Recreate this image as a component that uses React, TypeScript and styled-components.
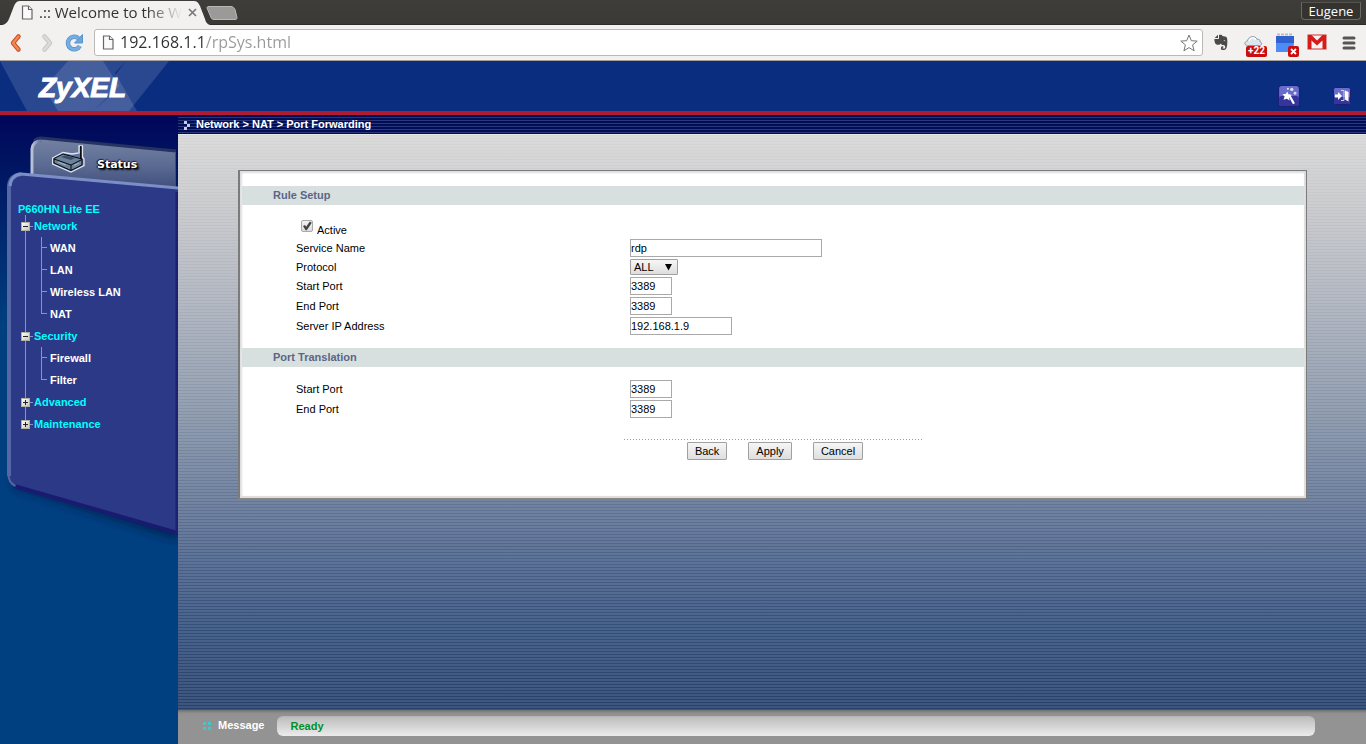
import React from "react";
import styled, { createGlobalStyle } from "styled-components";

const GlobalStyle = createGlobalStyle`
  * { box-sizing: border-box; }
  body { margin: 0; font: 11px/14px "Liberation Sans", Arial, sans-serif; color: #000; background: #003f80; }
  button, input, select { font: inherit; color: inherit; margin: 0; }
  ul { list-style: none; margin: 0; padding: 0; }
  h2 { margin: 0; font: inherit; font-weight: bold; }
  svg { display: block; flex: none; }
`;

const Page = styled.div`
  min-height: 100vh;
  display: flex;
  flex-direction: column;
`;

/* Browser window */
const TabStrip = styled.div`
  height: 25px;
  display: flex;
  align-items: flex-start;
  background: linear-gradient(#3f3d39, #3a3935);
  border-bottom: 1px solid #2c2b28;
`;
const Tab = styled.div`
  position: relative;
  width: 210px;
  height: 25px;
  padding: 0 15px 0 21px;
  display: flex;
  align-items: center;
  gap: 6px;
  flex: none;
`;
const TabShape = styled.svg`
  position: absolute;
  left: 0;
  top: 0;
`;
const TabTitle = styled.span`
  position: relative;
  flex: 1;
  white-space: nowrap;
  font: 15px/22px "Open Sans", "Noto Sans", sans-serif;
  color: #333;
  padding-bottom: 2px;
  mask-image: linear-gradient(90deg, #000 108px, transparent);
`;
const PlainButton = styled.button`
  position: relative;
  padding: 0;
  border: 0;
  background: none;
  display: flex;
  align-items: center;
  justify-content: center;
`;
const NewTab = styled(PlainButton)`
  padding-top: 6px;
  margin-left: -4px;
`;
const UserButton = styled.button`
  margin: 2px 5px 0 auto;
  height: 18px;
  width: 60px;
  padding: 0;
  border: 1px solid #6a6964;
  border-top-color: #55544f;
  border-radius: 0 0 4px 4px;
  background: #34332f;
  color: #fff;
  font: 13px/16px "Open Sans", "Noto Sans", sans-serif;
`;
const Toolbar = styled.div`
  height: 36px;
  padding: 0 6px 0 9px;
  display: flex;
  align-items: center;
  background: #f2f1f0;
  border-bottom: 1px solid #a5a29e;
`;
const NavButtons = styled.div`
  display: flex;
  gap: 12px;
  margin-right: 10px;
`;
const Omnibox = styled.label`
  flex: 1;
  height: 27px;
  padding: 0 4px 0 7px;
  display: flex;
  align-items: center;
  gap: 6px;
  background: #fff;
  border: 1px solid #bcbab7;
  border-radius: 3px;
`;
const UrlInput = styled.input`
  flex: 1;
  min-width: 0;
  height: 24px;
  padding: 0 0 2px;
  border: 0;
  outline: 0;
  font: 16px/22px "Open Sans", "Noto Sans", sans-serif;
  background: linear-gradient(90deg, #303030 84px, #999 84px);
  background-clip: text;
  -webkit-text-fill-color: transparent;
`;
const Extensions = styled.div`
  display: flex;
  align-items: center;
  gap: 10px;
  margin-left: 7px;
`;
const Extension = styled(PlainButton)`
  width: 22px;
  height: 26px;
`;
const Badge = styled.span`
  position: absolute;
  right: -3px;
  bottom: -1px;
  height: 11px;
  padding: 0 2px;
  border-radius: 2px;
  background: #cc0d0d;
  color: #fff;
  font: bold 10px/10px "Roboto", sans-serif;
`;

/* Router page */
const Header = styled.header`
  height: 54px;
  display: flex;
  justify-content: space-between;
  background: #0b2d80;
  border-bottom: 4px solid #b01a32;
`;
const Brand = styled.div`
  position: relative;
  width: 178px;
  padding: 11px 0 0 39px;
  color: #fff;
`;
const BrandArt = styled.svg`
  position: absolute;
  left: 0;
  top: 0;
`;
const BrandName = styled.span`
  position: relative;
  font: italic bold 28px/32px "Liberation Sans", Arial, sans-serif;
  -webkit-text-stroke: 1px #fff;
`;
const HeaderActions = styled.div`
  display: flex;
  align-items: center;
  gap: 33px;
  padding: 19px 15px 0 0;
`;
const Body = styled.div`
  flex: 1;
  display: flex;
`;
const Sidebar = styled.aside`
  position: relative;
  width: 178px;
  flex: none;
  background: linear-gradient(#00055a 0, #00105e 30px, #00256d 110px, #003f80 210px);
`;
const SideArt = styled.svg`
  position: absolute;
  left: 0;
  top: 0;
`;
const StatusLink = styled.a`
  position: relative;
  margin: 28px 0 0 52px;
  display: flex;
  align-items: center;
  gap: 11px;
  height: 32px;
  color: #fff;
  text-decoration: none;
  font: bold 11px/14px "DejaVu Sans", Verdana, sans-serif;
  text-shadow: 1px 1px 1px #000, 2px 2px 2px #000, -1px 0 1px #000, 0 -1px 1px #223;
  & > span { padding-top: 12px; }
`;
const Tree = styled.nav`
  position: relative;
  margin: 27px 0 0 18px;
  font-weight: bold;
`;
const Model = styled.div`
  color: #0ff;
  line-height: 14px;
  margin-bottom: -1px;
`;
const Groups = styled.ul`
  background: linear-gradient(#8b93c4, #8b93c4) 7px 0 / 1px calc(100% - 11px) no-repeat;
`;
const GroupRow = styled.div`
  height: 22px;
  padding-left: 3px;
  display: flex;
  align-items: center;
  gap: 4px;
  background: linear-gradient(#8b93c4, #8b93c4) 12px 11px / 3px 1px no-repeat;
`;
const Toggle = styled.button`
  width: 9px;
  height: 9px;
  padding: 0;
  border: 1px solid #b4b09c;
  background: linear-gradient(135deg, #fff, #c9c5bb);
`;
const TreeLink = styled.a<{ $top?: boolean }>`
  color: ${(p) => (p.$top ? "#0ff" : "#fff")};
  text-decoration: none;
  line-height: 22px;
`;
const SubList = styled.ul`
  background: linear-gradient(#8b93c4, #8b93c4) 23px 0 / 1px calc(100% - 11px) no-repeat;
`;
const SubItem = styled.li`
  height: 22px;
  padding-left: 32px;
  background: linear-gradient(#8b93c4, #8b93c4) 23px 10px / 6px 1px no-repeat;
`;
const Main = styled.main`
  flex: 1;
  min-width: 0;
  display: flex;
  flex-direction: column;
`;
const Breadcrumb = styled.div`
  height: 19px;
  padding-left: 5px;
  display: flex;
  align-items: center;
  gap: 5px;
  color: #fff;
  font-weight: bold;
  background: repeating-linear-gradient(#000c55 0 2px, #28387a 2px 3px);
  & > span { padding-bottom: 2px; }
`;
const Stage = styled.div`
  flex: 1;
  padding: 35px 59px 36px 60px;
  border-top: 1px solid #e8e8e8;
  background:
    repeating-linear-gradient(transparent 0 1px, rgba(255, 255, 255, 0.11) 1px 3px),
    linear-gradient(#d6d6d6 0%, #c6c7ca 12%, #abb0bb 29%, #8896a9 47%, #6c7d9a 60%, #4f658c 72%, #34507c 85%, #26406c 100%);
`;
const Panel = styled.form`
  padding: 15px 2px 0;
  min-height: 329px;
  background: #fff;
  border: 1px solid #7b7b7b;
  border-left-width: 2px;
  border-bottom-color: #8c8880;
  box-shadow: inset -2px -2px 1px #dcdcdc, inset 2px 2px 2px #dedede;
`;
const SectionTitle = styled.h2`
  height: 19px;
  padding-left: 31px;
  line-height: 19px;
  color: #5b6687;
  background: #d7e0de;
`;
const Fields = styled.div`
  padding: 13px 0 13px 54px;
  display: flex;
  flex-direction: column;
  gap: 2px;
`;
const Field = styled.div`
  display: grid;
  grid-template-columns: 334px 1fr;
  align-items: center;
  justify-items: start;
`;
const CheckRow = styled.label`
  padding: 2px 0 0 5px;
  display: flex;
  align-items: flex-start;
  gap: 4px;
  & > span { padding-top: 3px; }
`;
const CheckBox = styled.input`
  appearance: none;
  width: 12px;
  height: 12px;
  border: 1px solid #a9a9a9;
  border-radius: 2px;
  background: linear-gradient(#f2f2f2, #dcdcdc);
  &:checked::after {
    content: "";
    display: block;
    width: 10px;
    height: 10px;
    background: #444;
    clip-path: polygon(10% 50%, 30% 40%, 42% 58%, 78% 6%, 98% 18%, 48% 92%, 36% 92%);
  }
`;
const TextInput = styled.input<{ $w: number }>`
  width: ${(p) => p.$w}px;
  height: 18px;
  padding: 0;
  border: 1px solid #a9a9a9;
  border-radius: 0;
  background: #fff;
`;
const SelectWrap = styled.div`
  position: relative;
  display: flex;
  height: 16px;
`;
const Select = styled.select`
  appearance: none;
  width: 48px;
  height: 16px;
  padding: 0 3px;
  border: 1px solid #a0a0a0;
  border-radius: 1px;
  background: linear-gradient(#f6f6f6, #dedede);
  line-height: 14px;
`;
const Caret = styled.svg`
  position: absolute;
  right: 6px;
  top: 5px;
  pointer-events: none;
`;
const Actions = styled.div`
  width: 299px;
  margin: 8px auto 0;
  padding: 3px 0 0 4px;
  display: flex;
  justify-content: center;
  gap: 21px;
  background: repeating-linear-gradient(90deg, #999 0 1px, transparent 1px 3px) 0 0 / 100% 1px no-repeat;
`;
const FormButton = styled.button`
  height: 18px;
  padding: 0 7px;
  border: 1px solid #a0a0a0;
  border-radius: 1px;
  background: linear-gradient(#f6f6f6, #dedede);
  line-height: 16px;
`;
const MessageBar = styled.footer`
  height: 34px;
  padding: 3px 51px 5px 25px;
  display: flex;
  align-items: center;
  gap: 6px;
  color: #fff;
  font-weight: bold;
  background: linear-gradient(#6f7073 0, #8e8e8e 3px, #939393 6px);
  & > span { padding-bottom: 2px; }
`;
const MessageText = styled.output`
  flex: 1;
  height: 20px;
  margin-left: 7px;
  padding-left: 13px;
  line-height: 18px;
  color: #009029;
  border-radius: 6px;
  border-top: 1px solid #b5b5b5;
  background: linear-gradient(#bdbdbd, #ececec);
`;

const PageIconSvg = styled.svg`
  position: relative;
`;
const PageIcon = () => (
  <PageIconSvg width="12" height="15" viewBox="0 0 12 15" fill="#fafafa" stroke="#666" strokeWidth="1.200">
    <path d="M1.500 1h6l3.500 3.500v9.500h-9.500z" />
    <path d="M7.500 1v3.500h3.500" />
  </PageIconSvg>
);

const RouterIcon = () => (
  <svg width="34" height="28" viewBox="0 0 34 28">
    <path d="M0.500 13 11 7.500l9 1.500 7-1V1h3.500v11l1.500 2v6.500l-13 6.500L0.500 19z" fill="none" stroke="#dfe4ee" strokeWidth="1.300" />
    <path d="M2 13.500 11 9l19 5v6l-11 5.500L2 18z" fill="#6c8299" stroke="#05070f" />
    <path d="M2 14l17 6 11-5.500M19 20v5" fill="none" stroke="#05070f" />
    <path d="M9 12l10 3 4-2-10-2.500z" fill="#3b4a66" />
    <path d="M28.800 1v13" stroke="#05070f" strokeWidth="1.500" />
    <path d="M22 20.500l5-2.500M6 17l8 3" stroke="#a9bacd" />
  </svg>
);

const groups = [
  { name: "Network", open: true, items: ["WAN", "LAN", "Wireless LAN", "NAT"] },
  { name: "Security", open: true, items: ["Firewall", "Filter"] },
  { name: "Advanced", open: false, items: [] },
  { name: "Maintenance", open: false, items: [] },
];

function TextField({ id, label, value, w = 42 }: { id: string; label: string; value: string; w?: number }) {
  return (
    <Field>
      <label htmlFor={id}>{label}</label>
      <TextInput id={id} $w={w} defaultValue={value} />
    </Field>
  );
}

function BrowserChrome() {
  return (
    <>
      <TabStrip>
        <Tab>
          <TabShape width="212" height="25">
            <path d="M0 25c5 0 7-2 9-6l5-13c2-4 3-5 7-5h172c4 0 5 1 7 5l5 13c1 4 3 6 7 6z" fill="#f2f1f0" />
          </TabShape>
          <PageIcon />
          <TabTitle>.:: Welcome to the W</TabTitle>
          <PlainButton aria-label="Close tab">
            <svg width="9" height="9" stroke="#777" strokeWidth="1.600"><path d="M1 1l7 7M8 1l-7 7" /></svg>
          </PlainButton>
        </Tab>
        <NewTab aria-label="New tab">
          <svg width="32" height="14"><path d="M3 0.500h22c2 0 3 1 4 3l2 8c0 1.500-.5 2-2 2H8c-2 0-2.500-1-3-2L1 2C1 1 1.500.5 3 .5z" fill="#9b9a98" stroke="#b9b8b5" /></svg>
        </NewTab>
        <UserButton>Eugene</UserButton>
      </TabStrip>
      <Toolbar>
        <NavButtons>
          <PlainButton aria-label="Back">
            <svg width="14" height="20"><path d="M9.500 3.500 4 10l5.500 6.500" fill="none" stroke="#cf5322" strokeWidth="4.500" strokeLinecap="round" strokeLinejoin="round" /><path d="M9.500 3.500 4 10l5.500 6.500" fill="none" stroke="#f28a5a" strokeWidth="2.200" strokeLinecap="round" /></svg>
          </PlainButton>
          <PlainButton aria-label="Forward">
            <svg width="18" height="20"><path d="M9.500 3.500 15 10l-5.500 6.500" fill="none" stroke="#c9c7c4" strokeWidth="4.500" strokeLinecap="round" strokeLinejoin="round" /><path d="M9.500 3.500 15 10l-5.500 6.500" fill="none" stroke="#dddbd9" strokeWidth="2.500" strokeLinecap="round" /></svg>
          </PlainButton>
          <PlainButton aria-label="Reload">
            <svg width="19" height="20"><path d="M14.800 13a6.300 6.300 0 1 1-1.200-7.500" fill="none" stroke="#5a94cc" strokeWidth="4.500" /><path d="M14.800 13a6.300 6.300 0 1 1-1.200-7.500" fill="none" stroke="#77aee0" strokeWidth="2.800" /><path d="M17.500 1.500v8.500H9.500z" fill="#6ba5da" stroke="#5a94cc" /></svg>
          </PlainButton>
        </NavButtons>
        <Omnibox>
          <PageIcon />
          <UrlInput aria-label="Address" defaultValue="192.168.1.1/rpSys.html" />
          <PlainButton aria-label="Bookmark this page">
            <svg width="18" height="18" viewBox="0 0 18 18"><path d="M9 1l2.300 5.700 5.900.4-4.600 3.800 1.500 5.900L9 13.600l-5.100 3.200 1.500-5.900L.8 7.100l5.900-.4z" fill="#fff" stroke="#777" strokeLinejoin="round" /></svg>
          </PlainButton>
        </Omnibox>
        <Extensions>
          <Extension aria-label="Evernote">
            <svg width="14" height="17" viewBox="0 0 14 17"><path d="M5 1c2-.6 3 0 3.500 1l3.500.7c1.200.4 1.500 3 1.300 6.300-.2 4-.8 7-3.300 7H8.500C7 16 6.600 14.800 7 13.600c.3-1 1.200-1.400 2.300-1.200v1.400H8.600v.8h1.600c.9 0 1-.8 1-1.700 0-1.300-.9-1.900-2.400-1.900-1 0-1.600-.7-1.800-1.500-.8 1.300-3 1.400-4.500 1C1 10 .3 7.500.4 5H4c.8 0 1-.3 1-1z" fill="#4a4a4a" /><path d="M.7 4 4 .8V4z" fill="#4a4a4a" /><path d="M9.500 7c.2-1 1.700-1 2 .3-.7-.3-1.300-.3-2-.3z" fill="#eee" /></svg>
          </Extension>
          <Extension aria-label="Weather, 22 degrees">
            <svg width="19" height="20" viewBox="0 0 19 20"><path d="M3.500 12.500C0 12.500 0 8.500 3.500 8c.5-4.500 8-6.500 9.500-1.500 2-1 3.500.5 3 2.500 2.500.5 2 3.500-.5 3.500z" fill="#dbe6ee" stroke="#8b9ba8" /><path d="M5 8c1-3.500 5-4.500 7-1" fill="none" stroke="#fff" strokeWidth="1.500" /></svg>
            <Badge>+22</Badge>
          </Extension>
          <Extension aria-label="Calendar">
            <svg width="20" height="20"><rect x="1" y="3" width="18" height="7" fill="#2f62cf" /><path d="M1 10h18l-1 9H1z" fill="#4d8bf5" /><path d="M2 1.500h16" stroke="#bdbdbd" strokeWidth="2" strokeDasharray="3 1" /></svg>
            <Badge aria-label="Error">
              <svg width="7" height="11" stroke="#fff" strokeWidth="1.800"><path d="M1 3l5 5M6 3l-5 5" /></svg>
            </Badge>
          </Extension>
          <Extension aria-label="Mail">
            <svg width="20" height="18"><rect x="1" y="1" width="18" height="14" fill="#f3f3f3" stroke="#d03030" /><path d="M1 1h3.500L10 6.500 15.500 1H19v14h-3.500V6.500L10 11.500 4.500 6.500V15H1z" fill="#d61b1b" /></svg>
          </Extension>
          <Extension aria-label="Menu">
            <svg width="14" height="14" stroke="#555" strokeWidth="3" strokeLinecap="round"><path d="M2 2h10M2 7h10M2 12h10" /></svg>
          </Extension>
        </Extensions>
      </Toolbar>
    </>
  );
}

function SideNav() {
  return (
    <Sidebar>
      <SideArt width="178" height="430" viewBox="0 0 178 430">
        <defs>
          <linearGradient id="statusFill" x1="0" y1="0" x2="0" y2="1">
            <stop offset="0" stopColor="#7482a2" />
            <stop offset="0.500" stopColor="#5a6a92" />
            <stop offset="1" stopColor="#3a4678" />
          </linearGradient>
          <linearGradient id="edge" x1="0" y1="0" x2="1" y2="0">
            <stop offset="0" stopColor="#b9c3d8" />
            <stop offset="1" stopColor="#5d6c98" />
          </linearGradient>
          <filter id="soft" x="-20%" y="-20%" width="140%" height="140%"><feGaussianBlur stdDeviation="4" /></filter>
        </defs>
        <path d="M32 74V32q1-9 9-9l135 14v42z" fill="url(#statusFill)" />
        <path d="M34 26q3-3 7-3l135 13" fill="none" stroke="#26325f" strokeWidth="3" />
        <path d="M32 66V34q1-8 9-8" fill="none" stroke="url(#edge)" strokeWidth="3" />
        <path d="M175.500 38v37" stroke="#3f4c79" strokeWidth="1" />
        <path d="M14 373l164 52V200H14z" fill="#001a45" opacity="0.700" filter="url(#soft)" />
        <path d="M7 70q1-12 13-12l158 16v345L18 372q-10-2-11-11z" fill="#2b3986" />
        <path d="M14 371l164 47" stroke="#191b70" strokeWidth="4" />
        <path d="M177 77v341" stroke="#1c2173" strokeWidth="3" />
        <path d="M9 361V72q1-11 12-13" fill="none" stroke="#5368a5" strokeWidth="4" />
        <path d="M10 71q1-11 11-12l157 14" fill="none" stroke="#7b8fc6" strokeWidth="3" />
        <path d="M8.500 359q0 9 7 12" fill="none" stroke="#5368a5" strokeWidth="2" />
      </SideArt>
      <StatusLink href="#status">
        <RouterIcon />
        <span>Status</span>
      </StatusLink>
      <Tree aria-label="Settings">
        <Model>P660HN Lite EE</Model>
        <Groups>
          {groups.map((g) => (
            <li key={g.name}>
              <GroupRow>
                <Toggle aria-label={"Toggle " + g.name} aria-expanded={g.open}>
                  <svg width="7" height="7" stroke="#222"><path d={g.open ? "M1 3.500h5" : "M1 3.500h5M3.500 1v5"} /></svg>
                </Toggle>
                <TreeLink $top href={"#" + g.name}>{g.name}</TreeLink>
              </GroupRow>
              {g.items.length > 0 && (
                <SubList>
                  {g.items.map((i) => (
                    <SubItem key={i}><TreeLink href={"#" + i}>{i}</TreeLink></SubItem>
                  ))}
                </SubList>
              )}
            </li>
          ))}
        </Groups>
      </Tree>
    </Sidebar>
  );
}

export default function App() {
  return (
    <Page>
      <GlobalStyle />
      <BrowserChrome />
      <Header>
        <Brand>
          <BrandArt width="178" height="50">
            <g fill="#fff" fillOpacity="0.130">
              <path d="M0 0h126l-11 12 22 38H27z" />
              <path d="M68 0h35l16 25-26 25H58L44 27z" />
              <path d="M126 0h43l-40 50H93l22-19 1-18z" />
            </g>
          </BrandArt>
          <BrandName>ZyXEL</BrandName>
        </Brand>
        <HeaderActions>
          <PlainButton aria-label="Wizard">
            <svg width="22" height="22" viewBox="0 0 20 20"><rect x="0.500" y="0.500" width="19" height="19" rx="3" fill="#6a6ccb" stroke="#1c1d74" /><rect x="1" y="10" width="18" height="9" rx="2" fill="#34359c" /><path d="M10 9l4.500 8" stroke="#fff" strokeWidth="2" /><path d="M8.500 6l1 2.500 3 .5-2.500 2 .5 3-2.500-1.500L5 13.500l1-3L4 8.500l3-.3z" fill="#fff" /><circle cx="9" cy="3.500" r="1" fill="#dde" /><circle cx="12.500" cy="4" r="1.500" fill="#dde" /><circle cx="15.500" cy="7.500" r="1.300" fill="#dde" /></svg>
          </PlainButton>
          <PlainButton aria-label="Log out">
            <svg width="18" height="18"><rect x="0.500" y="0.500" width="17" height="17" rx="2" fill="#6a6ccb" stroke="#1c1d74" /><rect x="1" y="10" width="16" height="7" rx="1" fill="#34359c" /><path d="M2 7.500h3V5l4 4-4 4v-2.500H2z" fill="#fff" /><path d="M8 3.500h3v10H8" fill="none" stroke="#cfd0f0" /><path d="M12 3.500l3.500 1.500V14.500l-3.500-2z" fill="#fff" /></svg>
          </PlainButton>
        </HeaderActions>
      </Header>
      <Body>
        <SideNav />
        <Main>
          <Breadcrumb>
            <svg width="8" height="10" fill="#c9ccd8"><path d="M1 1h3v3H1zM4 4h3v3H4zM1 7h3v3H1z" /></svg>
            <span>Network &gt; NAT &gt; Port Forwarding</span>
          </Breadcrumb>
          <Stage>
            <Panel onSubmit={(e) => e.preventDefault()}>
              <SectionTitle>Rule Setup</SectionTitle>
              <Fields>
                <CheckRow>
                  <CheckBox type="checkbox" defaultChecked />
                  <span>Active</span>
                </CheckRow>
                <TextField id="name" label="Service Name" value="rdp" w={192} />
                <Field>
                  <label htmlFor="protocol">Protocol</label>
                  <SelectWrap>
                    <Select id="protocol" defaultValue="ALL"><option>ALL</option></Select>
                    <Caret width="7" height="7"><path d="M0 0h7L3.500 6.500z" /></Caret>
                  </SelectWrap>
                </Field>
                <TextField id="start" label="Start Port" value="3389" />
                <TextField id="end" label="End Port" value="3389" />
                <TextField id="ip" label="Server IP Address" value="192.168.1.9" w={102} />
              </Fields>
              <SectionTitle>Port Translation</SectionTitle>
              <Fields>
                <TextField id="tstart" label="Start Port" value="3389" />
                <TextField id="tend" label="End Port" value="3389" />
              </Fields>
              <Actions>
                <FormButton type="button">Back</FormButton>
                <FormButton type="submit">Apply</FormButton>
                <FormButton type="reset">Cancel</FormButton>
              </Actions>
            </Panel>
          </Stage>
          <MessageBar>
            <svg width="9" height="9" fill="#3fc8c8"><path d="M0 0h3v3H0zM5 0h3v3H5zM0 5h3v3H0zM5 5h3v3H5z" /></svg>
            <span>Message</span>
            <MessageText>Ready</MessageText>
          </MessageBar>
        </Main>
      </Body>
    </Page>
  );
}
